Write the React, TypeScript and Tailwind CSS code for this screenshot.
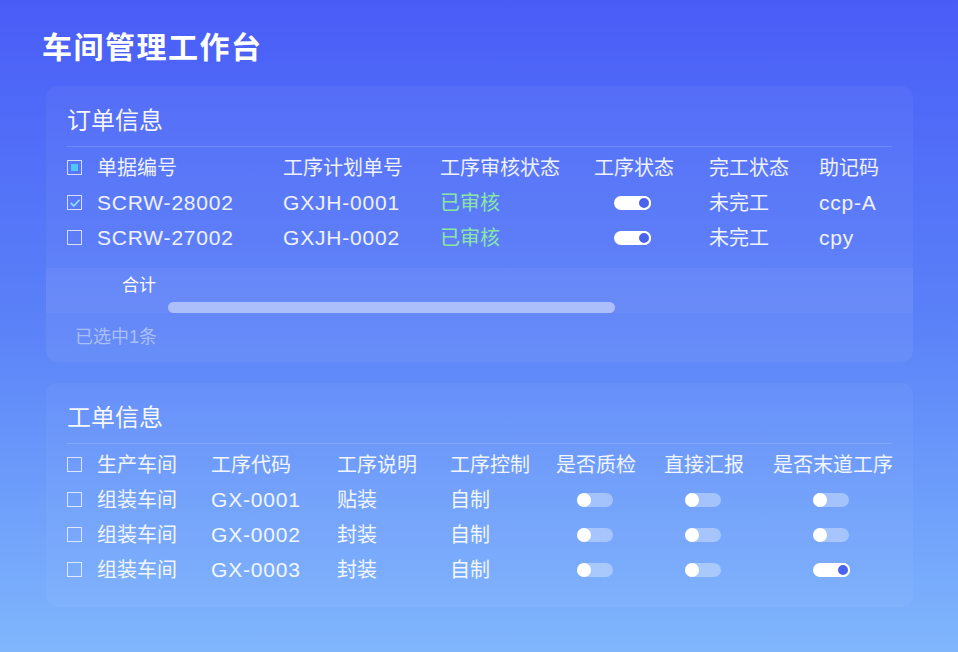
import type { ReactNode } from 'react'

const font = { fontFamily: '"Liberation Sans", "Noto Sans CJK SC", sans-serif' }

type CheckState = 'none' | 'checked' | 'partial'

function Check({ state = 'none' }: { state?: CheckState }) {
  return (
    <span className="w-[15px] h-[15px] border-[1.5px] border-white/75 flex items-center justify-center">
      {state === 'partial' && <span className="w-[7px] h-[7px] bg-[#4fc8f5]" />}
      {state === 'checked' && (
        <svg viewBox="0 0 12 12" className="w-[12px] h-[12px]">
          <path d="M1.8 6 L4.8 9 L10.4 2.8" fill="none" stroke="#8fd8ff" strokeWidth="1.8" />
        </svg>
      )}
    </span>
  )
}

function Toggle({ on }: { on: boolean }) {
  if (on) {
    return (
      <span className="w-[37px] h-[14px] rounded-full bg-white flex items-center justify-end">
        <span className="w-[14px] h-[14px] rounded-full bg-[#4a63ee] border-[2px] border-white" />
      </span>
    )
  }
  return (
    <span className="w-[36px] h-[14px] rounded-full bg-white/35 flex items-center">
      <span className="w-[14px] h-[14px] rounded-full bg-white" />
    </span>
  )
}

function Latin({ children }: { children: ReactNode }) {
  return <span className="text-[21px] tracking-[0.8px]">{children}</span>
}

function Card({ title, children }: { title: string; children: ReactNode }) {
  return (
    <section className="rounded-[12px] bg-white/[0.045] overflow-hidden">
      <div className="px-[21px] pt-[19px]">
        <h2 className="text-[24px] leading-[32px] text-white/95">{title}</h2>
        <div className="mt-[9px] h-px bg-white/15" />
      </div>
      {children}
    </section>
  )
}

const orderCols = 'grid grid-cols-[30px_186px_157px_154px_115px_110px_1fr] items-center h-[35px] text-[20px] whitespace-nowrap'
const workCols = 'grid grid-cols-[30px_114px_126px_113px_106px_108px_109px_1fr] items-center h-[35px] text-[20px] whitespace-nowrap'

const orders = [
  { id: 'SCRW-28002', plan: 'GXJH-0001', memo: 'ccp-A', checked: true },
  { id: 'SCRW-27002', plan: 'GXJH-0002', memo: 'cpy', checked: false },
]

const works = [
  { code: 'GX-0001', desc: '贴装', last: false },
  { code: 'GX-0002', desc: '封装', last: false },
  { code: 'GX-0003', desc: '封装', last: true },
]

export default function App() {
  return (
    <div
      className="w-[958px] h-[652px] overflow-hidden bg-gradient-to-b from-[#4a5cf7] via-[#5b82f8] to-[#80b6fc] text-white"
      style={font}
    >
      <h1 className="pl-[42px] pt-[28px] text-[30px] leading-[40px] font-bold tracking-[1.5px]">车间管理工作台</h1>

      <div className="pl-[46px] pr-[45px] mt-[18px] flex flex-col gap-[21px]">
        <Card title="订单信息">
          <div className="px-[21px] pt-[3px] text-white/90">
            <div className={orderCols}>
              <Check state="partial" />
              <span>单据编号</span>
              <span>工序计划单号</span>
              <span>工序审核状态</span>
              <span>工序状态</span>
              <span>完工状态</span>
              <span>助记码</span>
            </div>
            {orders.map((o) => (
              <div key={o.id} className={orderCols}>
                <Check state={o.checked ? 'checked' : 'none'} />
                <Latin>{o.id}</Latin>
                <Latin>{o.plan}</Latin>
                <span className="text-[#8be6a6]">已审核</span>
                <span className="pl-[20px] flex">
                  <Toggle on />
                </span>
                <span>未完工</span>
                <Latin>{o.memo}</Latin>
              </div>
            ))}
          </div>
          <div className="mt-[13px] h-[45px] bg-white/[0.05] flex flex-col">
            <span className="pl-[76px] pt-[6px] text-[17px] leading-[24px] text-white">合计</span>
            <span className="ml-[122px] mt-auto w-[447px] h-[11px] rounded-full bg-white/45" />
          </div>
          <div className="h-[49px] bg-white/[0.025] flex items-center pl-[29px] text-[18px] text-white/45">
            已选中1条
          </div>
        </Card>

        <Card title="工单信息">
          <div className="px-[21px] pt-[3px] pb-[20px] text-white/90">
            <div className={workCols}>
              <Check />
              <span>生产车间</span>
              <span>工序代码</span>
              <span>工序说明</span>
              <span>工序控制</span>
              <span>是否质检</span>
              <span>直接汇报</span>
              <span>是否末道工序</span>
            </div>
            {works.map((w) => (
              <div key={w.code} className={workCols}>
                <Check />
                <span>组装车间</span>
                <Latin>{w.code}</Latin>
                <span>{w.desc}</span>
                <span>自制</span>
                <span className="pl-[21px] flex">
                  <Toggle on={false} />
                </span>
                <span className="pl-[21px] flex">
                  <Toggle on={false} />
                </span>
                <span className="pl-[40px] flex">
                  <Toggle on={w.last} />
                </span>
              </div>
            ))}
          </div>
        </Card>
      </div>
    </div>
  )
}
